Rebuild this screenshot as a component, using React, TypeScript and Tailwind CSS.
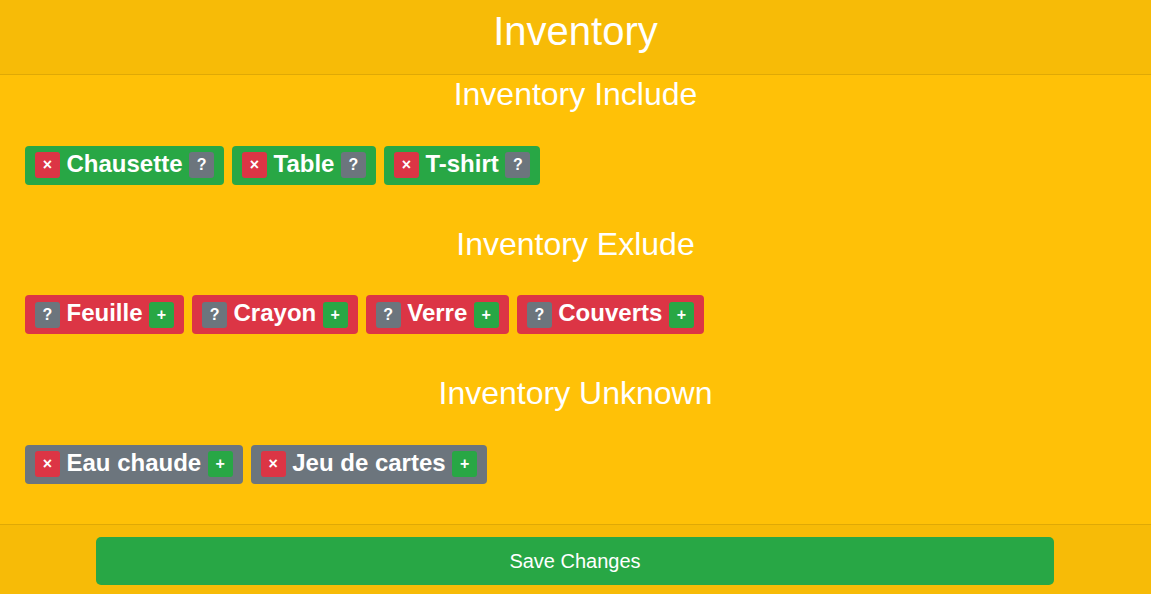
import { ReactNode } from "react";

type Tone = "green" | "red" | "gray";

const toneBg: Record<Tone, string> = {
  green: "bg-[#28a745]",
  red: "bg-[#dc3545]",
  gray: "bg-[#6c757d]",
};

type Item = {
  name: string;
  left: { label: string; tone: Tone };
  right: { label: string; tone: Tone };
};

const MiniButton = ({ label, tone }: { label: string; tone: Tone }) => (
  <span
    className={`${toneBg[tone]} flex h-[26px] w-[25px] items-center justify-center rounded-[3px] text-[16px] font-bold leading-none text-white`}
  >
    {label}
  </span>
);

const Tag = ({ item, tone }: { item: Item; tone: Tone }) => (
  <div
    className={`${toneBg[tone]} flex h-[39px] items-center gap-[6.5px] rounded px-[10px] text-white`}
  >
    <MiniButton {...item.left} />
    <span className="pb-[3px] text-[24px] font-bold leading-none">{item.name}</span>
    <MiniButton {...item.right} />
  </div>
);

const Section = ({ title, children }: { title: string; children: ReactNode }) => (
  <section className="mb-10">
    <h2 className="text-center text-[32px] leading-[38.5px] text-white">{title}</h2>
    <div className="mt-8 flex flex-wrap gap-2 px-[25px]">{children}</div>
  </section>
);

const include: Item[] = ["Chausette", "Table", "T-shirt"].map((name) => ({
  name,
  left: { label: "×", tone: "red" },
  right: { label: "?", tone: "gray" },
}));

const exclude: Item[] = ["Feuille", "Crayon", "Verre", "Couverts"].map((name) => ({
  name,
  left: { label: "?", tone: "gray" },
  right: { label: "+", tone: "green" },
}));

const unknown: Item[] = ["Eau chaude", "Jeu de cartes"].map((name) => ({
  name,
  left: { label: "×", tone: "red" },
  right: { label: "+", tone: "green" },
}));

export default function App() {
  return (
    <div
      className="flex h-screen flex-col overflow-hidden bg-[#ffc107]"
      style={{ fontFamily: '"Liberation Sans", Arial, sans-serif' }}
    >
      <header className="border-b border-[#dfa906] bg-[#f7bb07] pt-[7px] pb-[19px]">
        <h1 className="text-center text-[40px] leading-[48px] text-white">Inventory</h1>
      </header>

      <main>
        <Section title="Inventory Include">
          {include.map((item) => (
            <Tag key={item.name} item={item} tone="green" />
          ))}
        </Section>
        <Section title="Inventory Exlude">
          {exclude.map((item) => (
            <Tag key={item.name} item={item} tone="red" />
          ))}
        </Section>
        <Section title="Inventory Unknown">
          {unknown.map((item) => (
            <Tag key={item.name} item={item} tone="gray" />
          ))}
        </Section>
      </main>

      <footer className="flex-1 border-t border-[#dfa906] bg-[#f7bb07] pt-3">
        <button className="ml-[96px] block h-12 w-[958px] rounded-[5px] bg-[#28a745] text-[20px] text-white">
          Save Changes
        </button>
      </footer>
    </div>
  );
}
